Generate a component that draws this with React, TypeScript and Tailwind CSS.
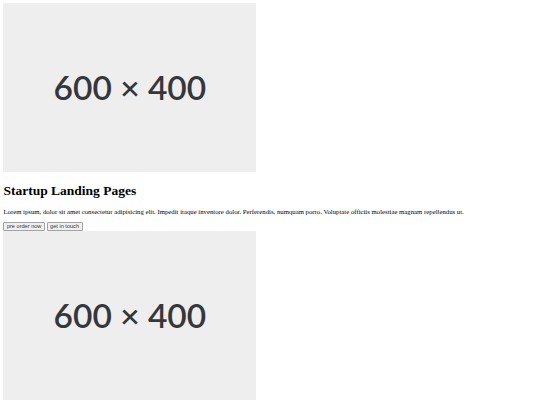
import React from "react";

function Placeholder() {
  return (
    <div className="flex h-[169px] w-[253px] items-center justify-center bg-[#eeeeee]">
      <span className="font-['Lato',sans-serif] text-[33.5px] font-semibold leading-none text-[#35373b]">
        600 × 400
      </span>
    </div>
  );
}

export default function App() {
  return (
    <div className="min-h-[405px] bg-white p-[3.4px] font-['Liberation_Serif',serif] text-black">
      <div className="pb-[1.7px]">
        <Placeholder />
      </div>
      <h1 className="mt-[9px] mb-[9px] text-[13.5px] font-bold leading-[15.5px]">
        Startup Landing Pages
      </h1>
      <p className="mb-[6.8px] text-[6.75px] leading-[7.8px]">
        Lorem ipsum, dolor sit amet consectetur adipisicing elit. Impedit itaque inventore dolor.
        Perferendis, numquam porro. Voluptate officiis molestiae magnam repellendus ut.
      </p>
      <div className="flex items-end gap-[1.7px]">
        <button className="h-[8.8px] rounded-[1px] border-[0.5px] border-[#a3a3a3] bg-[#f0f0f0] px-[2.5px] font-['Liberation_Sans',sans-serif] text-[5.6px] leading-none text-[#333333]">
          pre order now
        </button>
        <button className="h-[8.8px] rounded-[1px] border-[0.5px] border-[#a3a3a3] bg-[#f0f0f0] px-[2.5px] font-['Liberation_Sans',sans-serif] text-[5.6px] leading-none text-[#333333]">
          get in touch
        </button>
      </div>
      <Placeholder />
    </div>
  );
}
